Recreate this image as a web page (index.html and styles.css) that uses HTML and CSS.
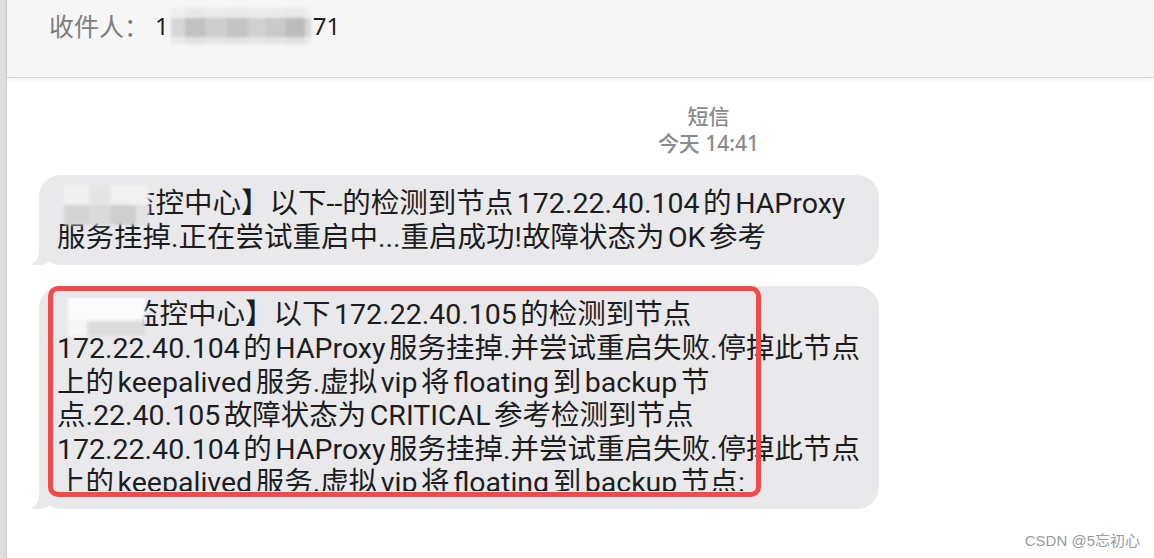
FILE: index.html
```html
<!DOCTYPE html>
<html lang="zh-CN">

<head>
    <meta charset="UTF-8" />
    <meta name="viewport" content="width=device-width, initial-scale=1.0" />
    <title>短信</title>
    <link rel="stylesheet" href="styles.css">
</head>

<body>
    <div class="edge"></div>

    <div class="main">
        <div class="header">
            <span class="to-label">收件人：</span>
            <span class="to-number">1<span class="mosaic header-mosaic"></span>71</span>
        </div>

        <div class="thread">
            <div class="stamp">
                <div class="stamp-kind">短信</div>
                <div class="stamp-time">今天 14:41</div>
            </div>

            <div class="bubble">
                <div class="text">
                    <span class="line"><span class="mosaic name-mosaic"></span>监控中心】以下--的检测到节点 172.22.40.104 的 HAProxy</span>
                    <span class="line">服务挂掉.正在尝试重启中...重启成功!故障状态为 OK 参考</span>
                </div>
            </div>

            <div class="bubble marked">
                <div class="text clipped">
                    <span class="line"><span class="mosaic name-mosaic light"></span>监控中心】以下 172.22.40.105 的检测到节点</span>
                    <span class="line">172.22.40.104 的 HAProxy 服务挂掉.并尝试重启失败.停掉此节点</span>
                    <span class="line">上的 keepalived 服务.虚拟 vip 将 floating 到 backup 节</span>
                    <span class="line">点.22.40.105 故障状态为 CRITICAL 参考检测到节点</span>
                    <span class="line">172.22.40.104 的 HAProxy 服务挂掉.并尝试重启失败.停掉此节点</span>
                    <span class="line">上的 keepalived 服务.虚拟 vip 将 floating 到 backup 节点:</span>
                </div>
                <div class="highlight"></div>
            </div>
        </div>
    </div>

    <div class="watermark">CSDN @5忘初心</div>
</body>

</html>
```

FILE: styles.css
```css
* {
    box-sizing: border-box;
}

body {
    margin: 0;
    height: 100vh;
    display: flex;
    background: #ffffff;
    color: #1d1d1f;
    font-family: 'Noto Sans', 'Noto Sans CJK SC', sans-serif;
    overflow: hidden;
}

.edge {
    width: 7px;
    flex-shrink: 0;
    background: #dedede;
    border-right: 1px solid #c9c9c9;
}

.main {
    flex: 1;
    display: flex;
    flex-direction: column;
}

.header {
    height: 78px;
    padding: 8px 0 0 42px;
    background: #f6f6f6;
    border-bottom: 1px solid #d7d7d7;
    box-shadow: 0 2px 4px rgba(0, 0, 0, 0.05);
    display: flex;
    align-items: flex-start;
    font-size: 25px;
    line-height: 36px;
}

.to-label {
    color: #7d7d7d;
    margin-right: 6px;
}

.to-number {
    color: #1f1f1f;
    font-size: 24px;
    display: flex;
    align-items: center;
}

.mosaic {
    display: inline-block;
    filter: blur(1.5px);
}

.header-mosaic {
    width: 140px;
    height: 36px;
    margin: 0 2px;
    background:
        linear-gradient(180deg, rgba(246, 246, 246, 0.75) 0 28%, transparent 28% 80%, rgba(246, 246, 246, 0.6) 80%),
        linear-gradient(90deg, #d6d6d6 0 10%, #c2c2c2 10% 24%, #cdcdcd 24% 40%, #c4c4c4 40% 55%, #d0d0d0 55% 68%, #c9c9c9 68% 82%, #bcbcbc 82% 96%, #d8d8d8 96%);
}

.thread {
    flex: 1;
    padding: 25px 0 0 32px;
    display: flex;
    flex-direction: column;
    gap: 21px;
}

.stamp {
    margin-left: 224px;
    margin-bottom: -3px;
    text-align: center;
    color: #8a8a8e;
    font-size: 21px;
    line-height: 27px;
    font-weight: 500;
}

.bubble {
    position: relative;
    width: 840px;
    padding: 12px 18px 10px 18px;
    background: #e9e9eb;
    border-radius: 22px;
    font-family: Roboto, 'Noto Sans CJK SC', sans-serif;
    font-size: 28.5px;
    line-height: 33.5px;
    word-spacing: -3.5px;
}

.bubble::before {
    content: "";
    position: absolute;
    left: -8px;
    bottom: 0;
    width: 24px;
    height: 22px;
    background: #e9e9eb;
    border-bottom-right-radius: 16px 14px;
}

.bubble::after {
    content: "";
    position: absolute;
    left: -12px;
    bottom: 0;
    width: 12px;
    height: 24px;
    background: #ffffff;
    border-bottom-right-radius: 12px 14px;
}

.bubble.marked {
    padding-bottom: 18px;
}

.line {
    display: block;
    white-space: nowrap;
}

.clipped {
    max-height: 193px;
    overflow: hidden;
}

.name-mosaic {
    width: 85px;
    height: 40px;
    margin: -4px -22px -4px 7px;
    vertical-align: middle;
    position: relative;
    background:
        linear-gradient(90deg, #efefef 0 30%, #e4e4e4 30% 55%, #f1f1f1 55% 100%) top / 100% 50% no-repeat,
        linear-gradient(90deg, #d4d4d4 0 30%, #dadada 30% 55%, #cfcfcf 55% 85%, #e2e2e2 85%) bottom / 100% 50% no-repeat;
}

.name-mosaic.light {
    width: 77px;
    margin-left: 11px;
    margin-right: -14px;
    background:
        linear-gradient(90deg, #fbfbfb 0 100%) top / 100% 62% no-repeat,
        linear-gradient(90deg, #f6f6f6 0 25%, #dcdcdc 25% 100%) bottom / 100% 38% no-repeat;
}

.highlight {
    position: absolute;
    left: 9px;
    top: 0;
    width: 713px;
    height: 211px;
    border: 5px solid #f24a4a;
    border-radius: 10px;
}

.watermark {
    position: absolute;
    right: 14px;
    bottom: 8px;
    font-family: 'Liberation Sans', 'Noto Sans CJK SC', sans-serif;
    font-size: 15px;
    color: #9a9a9a;
}
```
